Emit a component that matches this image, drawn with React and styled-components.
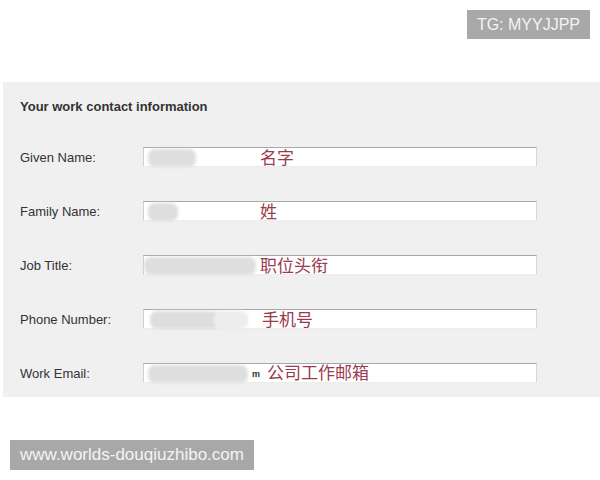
import React from 'react';
import styled, { createGlobalStyle } from 'styled-components';

const GlobalStyle = createGlobalStyle`
  html, body {
    margin: 0;
    padding: 0;
    background: #ffffff;
    font-family: "Liberation Sans", Arial, sans-serif;
  }
`;

const Page = styled.div`
  width: 600px;
  height: 480px;
  overflow: hidden;
  display: flex;
  flex-direction: column;
`;

const Header = styled.div`
  height: 82px;
  box-sizing: border-box;
  padding: 10px 10px 0 0;
  display: flex;
  justify-content: flex-end;
  align-items: flex-start;
`;

const Tag = styled.div`
  background: #a8a8a8;
  color: #f4f4f4;
  font-size: ${(p) => p.$size || 16}px;
  height: ${(p) => p.$height || 29}px;
  line-height: ${(p) => p.$height || 29}px;
  padding: 0 ${(p) => p.$pad || 10}px;
  white-space: nowrap;
`;

const Panel = styled.section`
  margin-left: 3px;
  background: #f0f0f0;
  box-sizing: border-box;
  padding: 18px 0 14px 17px;
`;

const Heading = styled.h3`
  margin: 0;
  font-size: 13px;
  line-height: 14px;
  font-weight: bold;
  color: #333333;
`;

const Row = styled.div`
  display: flex;
  align-items: center;
  height: 20px;
  margin-top: ${(p) => (p.$first ? 33 : 34)}px;
`;

const Label = styled.label`
  width: 123px;
  flex-shrink: 0;
  font-size: 13px;
  color: #333333;
`;

const Field = styled.div`
  position: relative;
  width: 394px;
  height: 20px;
  box-sizing: border-box;
  background: #ffffff;
  border-top: 1px solid #a8a8a8;
  border-left: 1px solid #cfcfcf;
  border-right: 1px solid #d6d6d6;
  border-bottom: 1px solid #ececec;
  display: flex;
  align-items: center;
`;

const Mask = styled.div`
  position: absolute;
  top: 1px;
  bottom: -1px;
  left: ${(p) => p.$left}px;
  width: ${(p) => p.$width}px;
  background: ${(p) => p.$tone || '#dedede'};
  border-radius: 7px;
  filter: blur(1.5px);
`;

const Note = styled.span`
  position: relative;
  padding-left: ${(p) => p.$indent}px;
  font-family: "Noto Sans CJK SC", sans-serif;
  font-size: 17px;
  line-height: 18px;
  color: #9a3a4c;
  white-space: nowrap;
`;

const Dot = styled.span`
  font-family: "Liberation Sans", Arial, sans-serif;
  font-size: 9px;
  font-weight: bold;
  color: #333;
  margin-right: 7px;
  vertical-align: 2px;
`;

const Footer = styled.div`
  margin-top: 43px;
  padding-left: 10px;
  display: flex;
`;

const fields = [
  { label: 'Given Name:', note: '名字', indent: 116, masks: [[4, 48]] },
  { label: 'Family Name:', note: '姓', indent: 116, masks: [[4, 30]] },
  { label: 'Job Title:', note: '职位头衔', indent: 116, masks: [[0, 112]] },
  { label: 'Phone Number:', note: '手机号', indent: 118, masks: [[6, 70], [70, 34, '#ededed']] },
  { label: 'Work Email:', note: '公司工作邮箱', indent: 108, masks: [[4, 100]], dot: true },
];

export default function App() {
  return (
    <Page>
      <GlobalStyle />
      <Header>
        <Tag $pad={10} $size={16}>TG: MYYJJPP</Tag>
      </Header>
      <Panel>
        <Heading>Your work contact information</Heading>
        {fields.map((f, i) => (
          <Row key={f.label} $first={i === 0}>
            <Label>{f.label}</Label>
            <Field>
              {f.masks.map(([left, width, tone]) => (
                <Mask key={left} $left={left} $width={width} $tone={tone} />
              ))}
              <Note $indent={f.indent}>
                {f.dot && <Dot>m</Dot>}
                {f.note}
              </Note>
            </Field>
          </Row>
        ))}
      </Panel>
      <Footer>
        <Tag $size={17} $height={30}>www.worlds-douqiuzhibo.com</Tag>
      </Footer>
    </Page>
  );
}
